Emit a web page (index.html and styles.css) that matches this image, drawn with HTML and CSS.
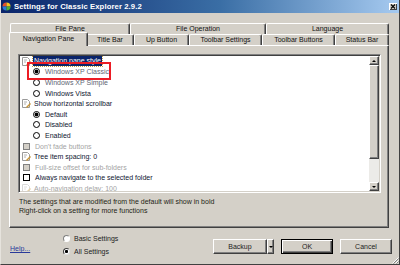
FILE: index.html
```html
<!DOCTYPE html>
<html lang="en">
<head>
    <meta charset="UTF-8">
    <meta name="viewport" content="width=device-width, initial-scale=1.0">
    <title>Settings for Classic Explorer 2.9.2</title>
    <link rel="stylesheet" href="styles.css">
</head>
<body>

    <div class="window">
        <div class="titlebar">
            <svg class="app-icon" viewBox="0 0 10 10" width="9" height="9">
                <path d="M5 5V0.5A4.5 4.5 0 0 0 0.5 5z" fill="#e4502a"/>
                <path d="M5 5V0.5A4.5 4.5 0 0 1 9.5 5z" fill="#f4c21e"/>
                <path d="M5 5H0.5A4.5 4.5 0 0 0 5 9.5z" fill="#2b79d6"/>
                <path d="M5 5H9.5A4.5 4.5 0 0 1 5 9.5z" fill="#4cae36"/>
            </svg>
            <span class="title">Settings for Classic Explorer 2.9.2</span>
            <span class="close">
                <svg viewBox="0 0 8 7" width="8" height="7">
                    <path d="M2 1.5l4 4M6 1.5l-4 4" stroke="#000" stroke-width="1.1"/>
                </svg>
            </span>
        </div>

        <div class="tabs">
            <div class="tab-row back">
                <div class="tab" style="width:120px">File Pane</div>
                <div class="tab" style="width:136px">File Operation</div>
                <div class="tab" style="width:123px">Language</div>
            </div>
            <div class="tab-row front">
                <div class="tab selected" style="width:79px">Navigation Pane</div>
                <div class="tab" style="width:48px">Title Bar</div>
                <div class="tab" style="width:55px">Up Button</div>
                <div class="tab" style="width:73px">Toolbar Settings</div>
                <div class="tab" style="width:73px">Toolbar Buttons</div>
                <div class="tab" style="width:54px">Status Bar</div>
            </div>
        </div>

        <div class="panel">
            <div class="list">
                <div class="items">
                    <div class="item">
                        <svg class="ico" viewBox="0 0 9 9" width="9" height="9">
                            <path d="M0.5 0.5h5l2 2v6h-7z" fill="#fff" stroke="#9a9a9a"/>
                            <path d="M2 3h3M2 5h2" stroke="#b0b0b0"/>
                            <path d="M4.5 8.5l4-4" stroke="#c8963a" stroke-width="1.4"/>
                        </svg>
                        <span class="sel">Navigation pane style</span>
                    </div>
                    <div class="item sub"><span class="radio on"></span><span class="dim">Windows XP Classic</span></div>
                    <div class="item sub"><span class="radio"></span><span class="dim">Windows XP Simple</span></div>
                    <div class="item sub"><span class="radio"></span>Windows Vista</div>
                    <div class="item">
                        <svg class="ico" viewBox="0 0 9 9" width="9" height="9">
                            <path d="M0.5 0.5h5l2 2v6h-7z" fill="#fff" stroke="#9a9a9a"/>
                            <path d="M2 3h3M2 5h2" stroke="#b0b0b0"/>
                            <path d="M4.5 8.5l4-4" stroke="#c8963a" stroke-width="1.4"/>
                        </svg>
                        Show horizontal scrollbar
                    </div>
                    <div class="item sub"><span class="radio on"></span>Default</div>
                    <div class="item sub"><span class="radio"></span>Disabled</div>
                    <div class="item sub"><span class="radio"></span>Enabled</div>
                    <div class="item off"><span class="check"></span>Don't fade buttons</div>
                    <div class="item">
                        <svg class="ico" viewBox="0 0 9 9" width="9" height="9">
                            <path d="M0.5 0.5h5l2 2v6h-7z" fill="#fff" stroke="#9a9a9a"/>
                            <path d="M2 3h3M2 5h2" stroke="#b0b0b0"/>
                            <path d="M4.5 8.5l4-4" stroke="#c8963a" stroke-width="1.4"/>
                        </svg>
                        Tree item spacing: 0
                    </div>
                    <div class="item off"><span class="check"></span>Full-size offset for sub-folders</div>
                    <div class="item"><span class="check"></span>Always navigate to the selected folder</div>
                    <div class="item off">
                        <svg class="ico" viewBox="0 0 9 9" width="9" height="9">
                            <path d="M0.5 0.5h5l2 2v6h-7z" fill="#fff" stroke="#d8d8d8"/>
                            <path d="M2 3h3M2 5h2" stroke="#dedede"/>
                            <path d="M4.5 8.5l4-4" stroke="#e6d2a8" stroke-width="1.4"/>
                        </svg>
                        Auto-navigation delay: 100
                    </div>
                </div>
                <div class="scrollbar">
                    <div class="sb-btn"><span class="arrow up"></span></div>
                    <div class="sb-thumb"></div>
                    <div class="sb-track"></div>
                    <div class="sb-btn"><span class="arrow down"></span></div>
                </div>
            </div>
            <p class="hint">The settings that are modified from the default will show in bold<br>Right-click on a setting for more functions</p>
        </div>

        <div class="footer">
            <a class="help" href="#">Help...</a>
            <div class="modes">
                <div class="mode"><span class="opt"></span>Basic Settings</div>
                <div class="mode"><span class="opt on"></span>All Settings</div>
            </div>
            <div class="buttons">
                <button class="btn backup">Backup</button>
                <button class="btn drop"><span class="arrow down"></span></button>
                <button class="btn ok">OK</button>
                <button class="btn cancel">Cancel</button>
            </div>
        </div>

        <svg class="grip" viewBox="0 0 8 8" width="8" height="8">
            <path d="M7.5 1.5l-6 6M7.5 4.5l-3 3" stroke="#fff"/>
            <path d="M7.5 2.5l-5 5M7.5 5.5l-2 2" stroke="#808080"/>
        </svg>
        <div class="redbox"></div>
    </div>

</body>
</html>
```

FILE: styles.css
```css
body {
    margin: 0;
    width: 400px;
    height: 265px;
    overflow: hidden;
    background-color: #d4d0c8;
    font-family: "Liberation Sans", Arial, sans-serif;
    font-size: 7px;
    color: #000;
}
.window {
    position: relative;
    height: 265px;
    box-sizing: border-box;
    border-left: 1px solid #e6e3dd;
    border-right: 1px solid #404040;
    border-bottom: 1px solid #404040;
}
.titlebar {
    height: 13px;
    display: flex;
    align-items: center;
    background: linear-gradient(to right, #0a246a 0%, #3a6ea5 55%, #a6caf0 100%);
}
.app-icon {
    margin-left: 1px;
    flex: none;
}
.title {
    margin-left: 3px;
    color: #fff;
    font-weight: bold;
    font-size: 7.7px;
    letter-spacing: 0.1px;
}
.close {
    margin-left: auto;
    margin-right: 2px;
    width: 8px;
    height: 7px;
    display: flex;
    background-color: #d4d0c8;
    box-shadow: inset 1px 1px #fff, inset -1px -1px #404040;
}

/* tabs */
.tabs {
    margin-top: 10px;
}
.tab-row {
    display: flex;
}
.tab-row.back {
    margin-left: 9px;
}
.tab-row.front {
    margin-left: 8px;
}
.tab {
    flex: none;
    box-sizing: border-box;
    height: 11px;
    border-top: 1px solid #fff;
    border-left: 1px solid #fff;
    border-right: 1px solid #404040;
    border-radius: 2px 2px 0 0;
    box-shadow: inset -1px 0 #808080;
    background-color: #d4d0c8;
    text-align: center;
    line-height: 10px;
    white-space: nowrap;
    color: #111;
}
.tab.selected {
    position: relative;
    z-index: 1;
    height: 14px;
    margin: -2px -2px -1px 0;
    padding-top: 1px;
}

/* panel */
.panel {
    margin-left: 8px;
    width: 380px;
    height: 183px;
    box-sizing: border-box;
    border-top: 1px solid #fff;
    border-left: 1px solid #fff;
    border-right: 1px solid #404040;
    border-bottom: 1px solid #404040;
    box-shadow: inset -1px -1px #808080;
    padding: 8px 7px 0 8px;
}
.list {
    height: 139px;
    box-sizing: border-box;
    display: flex;
    border: 1px solid;
    border-color: #808080 #fff #fff #808080;
    box-shadow: inset 1px 1px #404040, inset -1px -1px #d4d0c8;
    padding: 1px;
}
.items {
    flex: 1;
    background-color: #fff;
    overflow: hidden;
}
.item {
    height: 10.6px;
    display: flex;
    align-items: center;
    padding-left: 2px;
    white-space: nowrap;
    color: #0e1530;
}
.item.sub {
    padding-left: 13px;
}
.item.off {
    color: #a4a4a4;
}
.ico {
    flex: none;
    margin-right: 3px;
}
.sel {
    background-color: #0a246a;
    color: #fff;
    padding: 0 1px;
    margin-left: -1px;
    line-height: 10px;
    outline: 1px dotted #c8a040;
}
.dim {
    color: #5e6674;
}
.radio {
    flex: none;
    width: 7px;
    height: 7px;
    box-sizing: border-box;
    border: 1px solid #000;
    border-radius: 50%;
    background: #fff;
    margin-right: 5px;
}
.radio.on {
    background: radial-gradient(circle, #000 0 1.7px, #fff 2.2px);
}
.check {
    flex: none;
    width: 7px;
    height: 7px;
    box-sizing: border-box;
    border: 1px solid #000;
    background: #fff;
    margin: 0 5px 0 1px;
}
.item.off .check {
    border-color: #808080;
    background: #d4d0c8;
}

/* scrollbar */
.scrollbar {
    width: 10px;
    flex: none;
    display: flex;
    flex-direction: column;
}
.sb-btn,
.sb-thumb {
    box-sizing: border-box;
    background-color: #d4d0c8;
    border: 1px solid;
    border-color: #fff #404040 #404040 #fff;
    box-shadow: inset -1px -1px #808080;
}
.sb-btn {
    height: 9px;
    display: flex;
    align-items: center;
    justify-content: center;
}
.sb-thumb {
    height: 94px;
}
.sb-track {
    flex: 1;
    background-color: #ecebe8;
}
.arrow {
    width: 0;
    height: 0;
    border-left: 2px solid transparent;
    border-right: 2px solid transparent;
}
.arrow.up {
    border-bottom: 2px solid #000;
}
.arrow.down {
    border-top: 2px solid #000;
}

.hint {
    margin: 4px 0 0 1px;
    line-height: 9px;
    color: #1e1e14;
}

/* footer */
.footer {
    height: 35px;
    display: flex;
    align-items: flex-start;
    padding: 0 7px 0 9px;
}
.help {
    width: 53px;
    margin-top: 16px;
    line-height: 10px;
    color: #2a3a9a;
    text-decoration: underline;
}
.modes {
    margin-top: 4px;
}
.mode {
    height: 13px;
    display: flex;
    align-items: center;
    color: #222;
}
.opt {
    width: 7px;
    height: 7px;
    box-sizing: border-box;
    border-radius: 50%;
    border: 1px solid;
    border-color: #808080 #fff #fff #808080;
    background: #fff;
    margin-right: 4px;
}
.opt.on {
    border-color: #404040 #e0e0e0 #e0e0e0 #404040;
    background: radial-gradient(circle, #000 0 1.3px, #fff 1.8px);
}
.buttons {
    margin-left: auto;
    margin-top: 11px;
    display: flex;
}
.btn {
    height: 15px;
    box-sizing: border-box;
    padding: 0;
    font-family: inherit;
    font-size: 7px;
    color: #222;
    background-color: #d4d0c8;
    border: 1px solid;
    border-color: #fff #404040 #404040 #fff;
    box-shadow: inset -1px -1px #808080;
}
.backup {
    width: 54px;
}
.drop {
    width: 7px;
    display: flex;
    align-items: center;
    justify-content: center;
    margin-right: 7px;
}
.ok {
    width: 52px;
    margin-right: 7px;
    border-color: #000;
    box-shadow: inset 1px 1px #fff, inset -1px -1px #404040, inset -2px -2px #808080;
}
.cancel {
    width: 52px;
}

.grip {
    position: absolute;
    right: 0;
    bottom: 0;
}
.redbox {
    position: absolute;
    left: 26px;
    top: 62px;
    width: 84px;
    height: 18px;
    box-sizing: border-box;
    border: 2px solid #ec1c24;
}
```
